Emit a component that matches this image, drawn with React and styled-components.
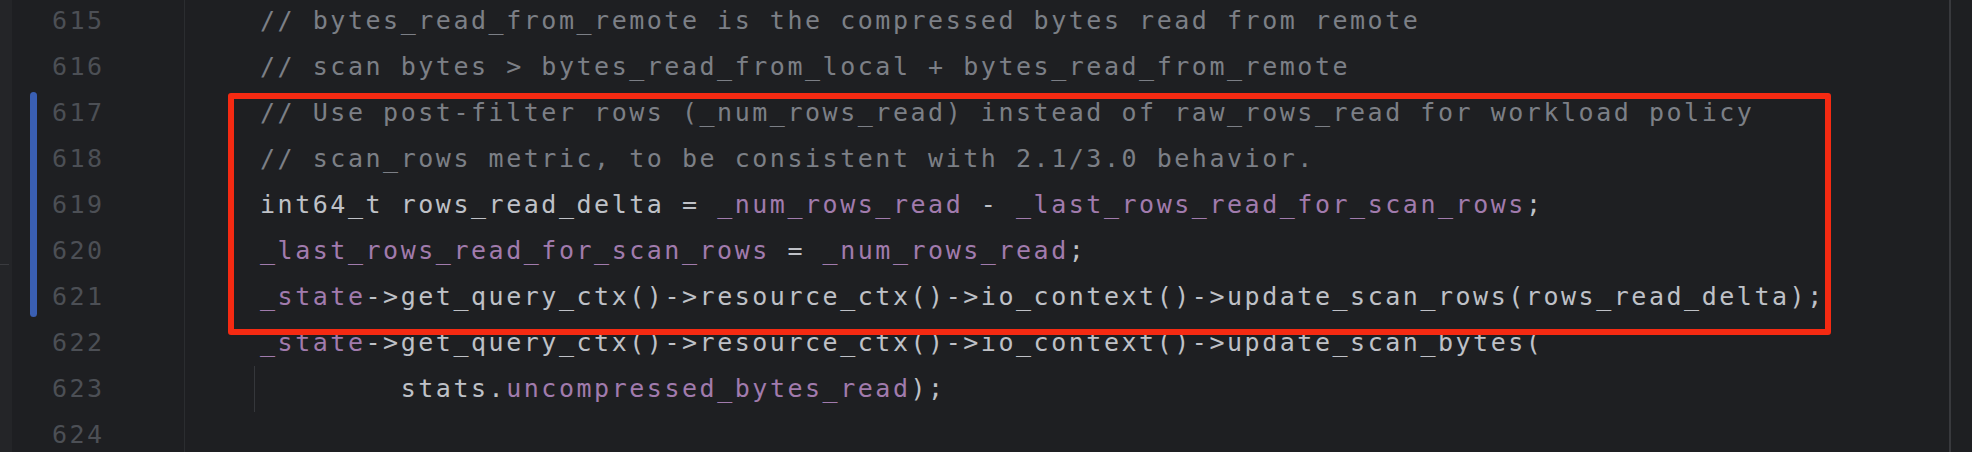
import styled, { createGlobalStyle } from "styled-components";

const GlobalStyle = createGlobalStyle`
  html, body {
    margin: 0;
    padding: 0;
    background: #1e1f22;
    overflow: hidden;
  }
`;

const Editor = styled.div`
  display: flex;
  width: 1972px;
  height: 452px;
  overflow: hidden;
  background: #1e1f22;
  font-family: "DejaVu Sans Mono", "Liberation Mono", monospace;
  font-size: 25px;
  line-height: 46px;
`;

// far left tool strip
const Strip = styled.div`
  width: 12px;
  flex-shrink: 0;
  background: #242528;
  display: flex;
  flex-direction: column;
`;
const StripTick = styled.div`
  margin-top: 264px;
  width: 9px;
  height: 1px;
  background: #3a3b3f;
`;

// gutter
const Gutter = styled.div`
  width: 172px;
  flex-shrink: 0;
  display: flex;
  flex-direction: column;
  margin-top: -2px;
`;
const GutterRow = styled.div`
  display: flex;
  height: 46px;
  padding-left: 18px;
`;
const ChangeMark = styled.div`
  width: 7px;
  flex-shrink: 0;
  background: ${({ $on }) => ($on ? "#3a5fb3" : "transparent")};
  margin-top: ${({ $start }) => ($start ? "2px" : "0")};
  margin-bottom: ${({ $end }) => ($end ? "3px" : "0")};
  border-radius: ${({ $start, $end }) =>
    `${$start ? "4px 4px" : "0 0"} ${$end ? "4px 4px" : "0 0"}`};
`;
const LineNo = styled.span`
  margin-left: 15px;
  color: #4c4f55;
  letter-spacing: 2.45px;
`;

const GutterLine = styled.div`
  width: 1px;
  flex-shrink: 0;
  background: #2b2d30;
`;

// code
const Code = styled.div`
  flex: 1;
  position: relative;
  display: flex;
  flex-direction: column;
  margin-top: -2px;
`;
const CodeRow = styled.div`
  display: flex;
  height: 46px;
  padding-left: 69px;
  white-space: pre;
`;
const IndentGuide = styled.div`
  width: 1px;
  flex-shrink: 0;
  background: ${({ $on }) => ($on ? "#35373b" : "transparent")};
`;
const Text = styled.span`
  margin-left: 5px;
  letter-spacing: 2.53px;
  color: #bfc1c7;
`;
const Comment = styled.span`
  color: #7c7f86;
`;
const Field = styled.span`
  color: #a17bad;
`;

const Callout = styled.div`
  position: absolute;
  left: 43px;
  top: 95px;
  width: 1603px;
  height: 242px;
  box-sizing: border-box;
  border: 6px solid #f52a12;
  border-radius: 3px;
`;

const RightRule = styled.div`
  width: 2px;
  flex-shrink: 0;
  background: #38393d;
`;
const RightPad = styled.div`
  width: 21px;
  flex-shrink: 0;
`;

const lines = [
  { n: 615, code: <Comment>// bytes_read_from_remote is the compressed bytes read from remote</Comment> },
  { n: 616, code: <Comment>// scan bytes &gt; bytes_read_from_local + bytes_read_from_remote</Comment> },
  {
    n: 617,
    changed: true,
    start: true,
    code: <Comment>// Use post-filter rows (_num_rows_read) instead of raw_rows_read for workload policy</Comment>,
  },
  {
    n: 618,
    changed: true,
    code: <Comment>// scan_rows metric, to be consistent with 2.1/3.0 behavior.</Comment>,
  },
  {
    n: 619,
    changed: true,
    code: (
      <>
        int64_t rows_read_delta = <Field>_num_rows_read</Field> - <Field>_last_rows_read_for_scan_rows</Field>;
      </>
    ),
  },
  {
    n: 620,
    changed: true,
    code: (
      <>
        <Field>_last_rows_read_for_scan_rows</Field> = <Field>_num_rows_read</Field>;
      </>
    ),
  },
  {
    n: 621,
    changed: true,
    end: true,
    code: (
      <>
        <Field>_state</Field>-&gt;get_query_ctx()-&gt;resource_ctx()-&gt;io_context()-&gt;update_scan_rows(rows_read_delta);
      </>
    ),
  },
  {
    n: 622,
    code: (
      <>
        <Field>_state</Field>-&gt;get_query_ctx()-&gt;resource_ctx()-&gt;io_context()-&gt;update_scan_bytes(
      </>
    ),
  },
  {
    n: 623,
    guide: true,
    code: (
      <>
        {"        "}stats.<Field>uncompressed_bytes_read</Field>);
      </>
    ),
  },
  { n: 624, code: null },
];

export default function App() {
  return (
    <>
      <GlobalStyle />
      <Editor>
        <Strip>
          <StripTick />
        </Strip>
        <Gutter>
          {lines.map((l) => (
            <GutterRow key={l.n}>
              <ChangeMark $on={l.changed} $start={l.start} $end={l.end} />
              <LineNo>{l.n}</LineNo>
            </GutterRow>
          ))}
        </Gutter>
        <GutterLine />
        <Code>
          {lines.map((l) => (
            <CodeRow key={l.n}>
              <IndentGuide $on={l.guide} />
              <Text>{l.code}</Text>
            </CodeRow>
          ))}
          <Callout />
        </Code>
        <RightRule />
        <RightPad />
      </Editor>
    </>
  );
}
